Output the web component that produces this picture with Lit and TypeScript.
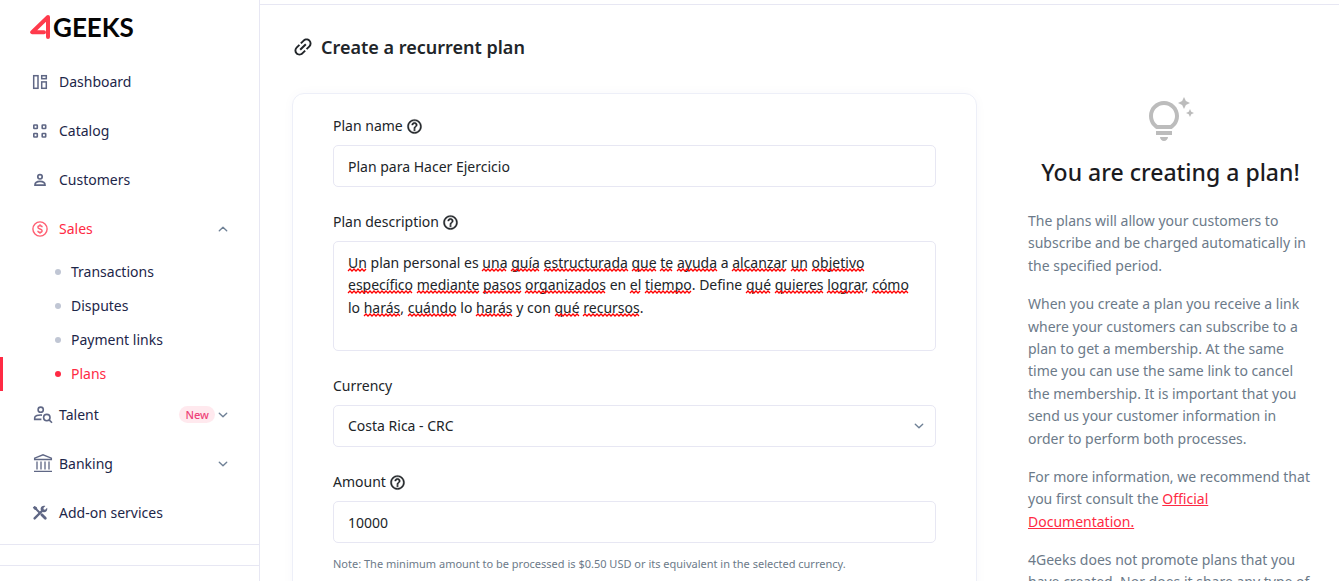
import { LitElement, html, svg, css, nothing, TemplateResult } from "lit";
import { customElement, property, state } from "lit/decorators.js";

interface NavItem {
  label: string;
  icon: string;
  active?: boolean;
  badge?: string;
  expand?: "up" | "down";
  children?: { label: string; active?: boolean }[];
}

const NAV: NavItem[] = [
  { label: "Dashboard", icon: "dashboard" },
  { label: "Catalog", icon: "catalog" },
  { label: "Customers", icon: "customers" },
  {
    label: "Sales",
    icon: "sales",
    active: true,
    expand: "up",
    children: [
      { label: "Transactions" },
      { label: "Disputes" },
      { label: "Payment links" },
      { label: "Plans", active: true },
    ],
  },
  { label: "Talent", icon: "talent", badge: "New", expand: "down" },
  { label: "Banking", icon: "banking", expand: "down" },
  { label: "Add-on services", icon: "tools" },
];

const icon = (size: number, box: string, body: TemplateResult | unknown, cls = "") =>
  html`<svg class=${cls} width=${size} height=${size} viewBox=${box} aria-hidden="true">${body}</svg>`;

const NAV_ICONS: Record<string, TemplateResult> = {
  dashboard: icon(16, "0 0 16 16", svg`
    <g fill="none" stroke="currentColor" stroke-width="1.5">
      <rect x="1.7" y="1.7" width="4.3" height="12.6"/>
      <rect x="9.700" y="1.7" width="4.6" height="3"/>
      <rect x="9.700" y="7.9" width="4.6" height="6.4"/>
    </g>`),
  catalog: icon(16, "0 0 16 16", svg`
    <g fill="none" stroke="currentColor" stroke-width="1.6">
      <rect x="1.8" y="2" width="3.5" height="3.5" rx=".6"/>
      <rect x="10.2" y="2" width="3.5" height="3.5" rx=".6"/>
      <rect x="1.8" y="10.5" width="3.5" height="3.5" rx=".6"/>
      <rect x="10.2" y="10.5" width="3.5" height="3.5" rx=".6"/>
    </g>`),
  customers: icon(16, "0 0 16 16", svg`
    <g fill="none" stroke="currentColor" stroke-width="1.7">
      <circle cx="8" cy="4.8" r="2.2"/>
      <path d="M3 13.100c0-2.500 1.900-3.700 5-3.700s5 1.200 5 3.700z"/>
    </g>`),
  sales: icon(16, "0 0 16 16", svg`
    <g fill="none" stroke="currentColor" stroke-width="1.4" opacity=".75">
      <circle cx="8" cy="8" r="7.1"/>
      <path d="M10.1 6.3c0-1-.9-1.6-2.1-1.6s-2.1.6-2.1 1.6c0 2.2 4.2 1.2 4.2 3.4 0 1-.9 1.6-2.1 1.6s-2.1-.6-2.1-1.6M8 3.2v1.5M8 11.3v1.5"/>
    </g>`),
  talent: icon(20, "0 0 20 20", svg`
    <g fill="none" stroke="currentColor" stroke-width="1.6">
      <circle cx="7.700" cy="4.700" r="2.6"/>
      <path d="M9 10.100c-4-.4-7.300.8-7.300 2.700v1.600h6.700"/>
      <circle cx="13.800" cy="12.600" r="3.200"/>
      <path d="M16.100 14.900l2.900 2.900"/>
    </g>`),
  banking: icon(20, "0 0 20 20", svg`
    <g fill="none" stroke="currentColor" stroke-width="1.3">
      <path d="M1.600 5.500V4.200L10 .8l8.400 3.400v1.300zM4 7.500v8M8 7.500v8M12 7.500v8M16 7.500v8M1 17.300h18"/>
    </g>`),
  tools: icon(16, "0 0 16 16", svg`
    <g stroke="currentColor" stroke-linecap="round" fill="none">
      <path d="M2.600 13.400L10 6" stroke-width="2.400"/>
      <path d="M2.600 2.600l4.600 4.600" stroke-width="2"/>
      <path d="M9.800 9.800l3.500 3.500" stroke-width="2.800"/>
    </g>
    <path fill="currentColor" d="M.8 2.600L2.600.9l2.200 1.300.5 1.500-1.400 1.400-1.600-.5zM13.400 1.100l-2 2 .4 1.300 1.300.4 2-2c.7 2.400-.7 4.400-3 4.500-2 .1-3.700-1.600-3.500-3.600.2-2.100 2.500-3.500 4.800-2.600z"/>`),
};

const chevron = (dir: string) => icon(10, "0 0 10 10",
  svg`<path fill="none" stroke="currentColor" stroke-width="1.4" stroke-linecap="round" stroke-linejoin="round" d=${dir === "up" ? "M1.3 6.7L5 3.3l3.700 3.400" : "M1.3 3.3L5 6.7l3.700-3.400"}/>`,
  "chevron");

const helpIcon = icon(17, "0 0 24 24", svg`<path fill="currentColor" stroke="currentColor" stroke-width=".5" d="M11 18h2v-2h-2v2zm1-16C6.480 2 2 6.480 2 12s4.480 10 10 10 10-4.480 10-10S17.520 2 12 2zm0 18c-4.410 0-8-3.590-8-8s3.590-8 8-8 8 3.590 8 8-3.590 8-8 8zm0-14c-2.210 0-4 1.790-4 4h2c0-1.100.9-2 2-2s2 .9 2 2c0 2-3 1.750-3 5h2c0-2.250 3-2.500 3-5 0-2.210-1.790-4-4-4z"/>`);

const linkIcon = icon(24, "0 0 24 24", svg`<path fill="currentColor" transform="rotate(-45 12 12)" d="M3.900 12c0-1.710 1.390-3.100 3.100-3.100h4V7H7c-2.760 0-5 2.240-5 5s2.240 5 5 5h4v-1.900H7c-1.710 0-3.100-1.390-3.100-3.100zM8 13h8v-2H8v2zm9-6h-4v1.900h4c1.710 0 3.100 1.390 3.100 3.100s-1.390 3.100-3.100 3.100h-4V17h4c2.760 0 5-2.240 5-5s-2.240-5-5-5z"/>`, "link-icon");

const bulbIcon = icon(48, "0 0 24 24", svg`<path fill="currentColor" d="M7 20h4c0 1.100-.9 2-2 2s-2-.9-2-2zm-2-1h8v-2H5v2zm11.500-9.500c0 3.820-2.660 5.860-3.770 6.500H5.270c-1.110-.64-3.770-2.680-3.770-6.500C1.500 5.360 4.860 2 9 2s7.500 3.360 7.500 7.500zm-2 0C14.500 6.470 12.030 4 9 4S3.500 6.470 3.500 9.500c0 2.470 1.490 3.890 2.350 4.500h6.300c.86-.61 2.350-2.030 2.350-4.500zm6.870-2.130L20 8l1.370.63L22 10l.63-1.370L24 8l-1.370-.63L22 6l-.63 1.370zM19 6l.94-2.060L22 3l-2.060-.94L19 0l-.94 2.060L16 3l2.060.94L19 6z"/>`, "bulb");

@customElement("side-nav")
class SideNav extends LitElement {
  static styles = css`
    :host { display: flex; flex-direction: column; box-sizing: border-box; border-right: 1px solid #e7e7f3; background: #fff; }
    .logo { display: flex; align-items: center; padding: 10px 0 0 30px; height: 44px; box-sizing: border-box; text-decoration: none; color: #050505; }
    .word { font: 700 26px/30px Lato, sans-serif; margin-left: 2px; }
    .menu { list-style: none; margin: 0; padding: 13px 0 7px; border-bottom: 1px solid #e7e7f3; }
    .foot { height: 20px; border-bottom: 1px solid #e7e7f3; }
    .item { display: flex; align-items: center; height: 49px; padding: 0 31px 0 32px; color: #1d2649; text-decoration: none; }
    .slot { box-sizing: border-box; width: 27px; display: flex; color: #5f6785; }
    .wide { padding-left: 1px; }
    .label { flex: 1; }
    .on, .on .slot { color: #ff2a44; }
    .chevron { color: #6f8196; }
    .badge { background: #ffe9ee; color: #ee4279; font-size: 11px; font-weight: 500; line-height: 17px; border-radius: 9px; padding: 0 6px; margin-right: 3px; }
    .sub { list-style: none; margin: 0 0 -1px; padding: 2px 0 0; }
    .child { display: flex; align-items: center; height: 34px; box-sizing: border-box; padding-left: 52px; border-left: 3px solid transparent; color: #1d2649; text-decoration: none; }
    .child.on { border-color: #ff2a44; color: #ff2a44; }
    .dot { width: 6px; height: 6px; border-radius: 50%; background: #c0c6d4; margin-right: 10px; }
    .child.on .dot { background: #ff2a44; }
  `;

  render() {
    return html`
      <a class="logo" href="#" aria-label="4Geeks">
        <svg width="21" height="26" viewBox="0 0 21 26" aria-hidden="true">
          <path fill="none" stroke="#ff3a4c" stroke-width="4" stroke-linejoin="round" stroke-linecap="round" d="M18 23V3L2.200 18.200H14"/>
        </svg>
        <span class="word">GEEKS</span>
      </a>
      <ul class="menu">
        ${NAV.map((n) => html`
          <li>
            <a class="item ${n.active ? "on" : ""}" href="#">
              <span class="slot ${n.icon === "talent" || n.icon === "banking" ? "wide" : ""}">${NAV_ICONS[n.icon]}</span>
              <span class="label">${n.label}</span>
              ${n.badge ? html`<span class="badge">${n.badge}</span>` : nothing}
              ${n.expand ? chevron(n.expand) : nothing}
            </a>
            ${n.children ? html`<ul class="sub">
              ${n.children.map((c) => html`<li><a class="child ${c.active ? "on" : ""}" href="#"><span class="dot"></span>${c.label}</a></li>`)}
            </ul>` : nothing}
          </li>`)}
      </ul>
      <div class="foot"></div>`;
  }
}

interface Mark { x: number; y: number; width: number; }

/* Zigzag under one flagged word, two pixels per stroke. */
const zigzag = (m: Mark) => {
  let d = `M${m.x} ${m.y + 1}`;
  for (let i = 1; i * 2 <= m.width; i++) d += `L${m.x + i * 2} ${m.y + (i % 2 ? -1 : 1)}`;
  return d;
};

/* Text area that underlines the words flagged by the spelling checker; flagged words are written in [brackets]. */
@customElement("spell-area")
class SpellArea extends LitElement {
  @property() source = "";
  @property() label = "";
  @state() private marks: Mark[] = [];
  private observer = new ResizeObserver(() => this.measure());

  static styles = css`
    :host { display: grid; position: relative; height: 110px; }
    .text { box-sizing: border-box; width: 100%; height: 100%; margin: 0; padding: 10px 14px; border: 1px solid #e7e7f3; font: inherit; line-height: 1.6; white-space: pre-wrap; overflow: hidden; border-radius: 5px; background: transparent; color: #212529; resize: none; outline: none; }
    .ruler { position: absolute; inset: 0; visibility: hidden; }
    .marks { position: absolute; inset: 0; width: 100%; height: 100%; pointer-events: none; }
  `;

  firstUpdated() {
    this.observer.observe(this);
    document.fonts.ready.then(() => this.measure());
  }

  disconnectedCallback() {
    super.disconnectedCallback();
    this.observer.disconnect();
  }

  /* Lays the words out once in a throwaway copy of the box and notes where the flagged ones fall. */
  private measure() {
    const ruler = document.createElement("div");
    ruler.className = "text ruler";
    this.source.split(/[\[\]]/).forEach((part, i) => {
      const span = document.createElement("span");
      span.textContent = part;
      if (i % 2) span.dataset.flagged = "";
      ruler.append(span);
    });
    this.renderRoot.append(ruler);
    const base = ruler.getBoundingClientRect();
    this.marks = [...ruler.querySelectorAll("[data-flagged]")].map((el) => {
      const r = el.getBoundingClientRect();
      return { x: Math.round(r.left - base.left), y: Math.round(r.bottom - base.top) - 2, width: r.width };
    });
    ruler.remove();
  }

  render() {
    return html`
      <textarea class="text" spellcheck="false" aria-label=${this.label} .value=${this.source.replace(/[\[\]]/g, "")}></textarea>
      <svg class="marks" aria-hidden="true">
        ${this.marks.map((m) => svg`<path fill="none" stroke="#f00" stroke-width="1.300" d=${zigzag(m)}/>`)}
      </svg>`;
  }
}

@customElement("app-root")
class AppRoot extends LitElement {
  static styles = css`
    :host { display: grid; grid-template-columns: 260px minmax(0, 1fr); height: 100vh; overflow: hidden; background: #fff; color: #212529; font: 400 14px/22px "Noto Sans", sans-serif; }
    .main { border-top: 1px solid #e7e7f3; margin-top: 4px; padding: 30px 26px 40px 32px; overflow-y: auto; scrollbar-width: none; }
    .title { display: flex; align-items: center; gap: 6px; margin: 0; font-size: 18px; font-weight: 600; line-height: 24px; }
    .link-icon { margin-left: -1px; }
    .layout { display: grid; grid-template-columns: minmax(0, 1fr) 285px; gap: 51px; margin-top: 34px; align-items: start; }
    .card { display: flex; flex-direction: column; gap: 24px; border: 1px solid #edeff8; border-radius: 12px; padding: 21px 40px 40px; box-shadow: 0 0 12px rgba(60, 60, 120, 0.03); }
    .field { display: flex; flex-direction: column; gap: 8px; }
    .caption { display: flex; align-items: center; gap: 3px; }
    .control { box-sizing: border-box; width: 100%; height: 42px; margin: 0; padding: 0 14px; border: 1px solid #e7e7f3; border-radius: 5px; background: #fff; color: #212529; font: inherit; outline: none; appearance: none; }
    .pick { display: grid; align-items: center; }
    .pick > * { grid-area: 1 / 1; }
    .chevron { justify-self: end; margin-right: 12px; color: #6f8196; pointer-events: none; }
    .note { margin: 2px 0 0; font-size: 11px; line-height: 22px; color: #6c7a89; }
    .tips { padding-top: 4px; color: #6c7a89; line-height: 1.6; }
    .bulb { display: block; margin: 0 auto; padding-right: 2px; color: #bcbcbc; }
    .tips-title { margin: 11px 0 22px; font-size: 23px; font-weight: 500; line-height: 32px; text-align: center; color: #1b1b1f; }
    .para { margin: 0 0 16px; }
    .doc { color: #ff2a44; }
  `;

  render() {
    return html`
      <side-nav></side-nav>
      <main class="main">
        <h1 class="title">${linkIcon}Create a recurrent plan</h1>
        <div class="layout">
          <form class="card">
            <div class="field">
              <label class="caption" for="name">Plan name ${helpIcon}</label>
              <input class="control" id="name" type="text" value="Plan para Hacer Ejercicio">
            </div>
            <div class="field">
              <span class="caption">Plan description ${helpIcon}</span>
              <spell-area label="Plan description" source="[Un] plan personal es [una] [guía] [estructurada] [que] [te] [ayuda] a [alcanzar] [un] [objetivo] [específico] [mediante] [pasos] [organizados] en [el] [tiempo]. Define [qué] [quieres] [lograr], [cómo] lo [harás], [cuándo] lo [harás] y con [qué] [recursos]."></spell-area>
            </div>
            <div class="field">
              <label class="caption" for="currency">Currency</label>
              <div class="pick">
                <select class="control" id="currency"><option>Costa Rica - CRC</option></select>
                ${chevron("down")}
              </div>
            </div>
            <div class="field">
              <label class="caption" for="amount">Amount ${helpIcon}</label>
              <input class="control" id="amount" type="text" inputmode="numeric" value="10000">
              <p class="note">Note: The minimum amount to be processed is $0.50 USD or its equivalent in the selected currency.</p>
            </div>
          </form>
          <aside class="tips">
            ${bulbIcon}
            <h2 class="tips-title">You are creating a plan!</h2>
            <p class="para">The plans will allow your customers to subscribe and be charged automatically in the specified period.</p>
            <p class="para">When you create a plan you receive a link where your customers can subscribe to a plan to get a membership. At the same time you can use the same link to cancel the membership. It is important that you send us your customer information in order to perform both processes.</p>
            <p class="para">For more information, we recommend that you first consult the <a class="doc" href="#">Official Documentation.</a></p>
            <p class="para">4Geeks does not promote plans that you have created. Nor does it share any type of</p>
          </aside>
        </div>
      </main>`;
  }
}
